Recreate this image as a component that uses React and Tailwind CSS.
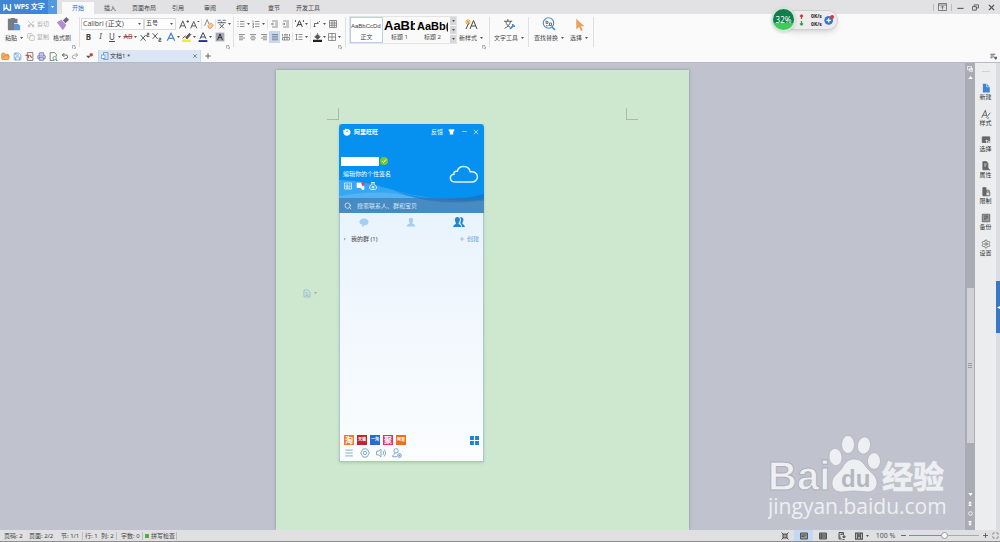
import React, { useState } from 'react';
import { Scissors, Copy, Undo2, Redo2, Printer, Save, FolderOpen, Settings, Plus, Minus, X, Menu, Search, Maximize } from 'lucide-react';

const Svg = ({ className = 'size-[10px]', box = '0 0 16 16', children }) => (
    <svg viewBox={box} className={`shrink-0 ${className}`} fill="none" stroke="currentColor" strokeWidth="1.4" aria-hidden="true">{children}</svg>
);

const Caret = ({ color = '#555' }) => (
    <svg viewBox="0 0 6 4" className="w-[3px] h-[2px] shrink-0" fill={color} aria-hidden="true"><path d="M0 0h6L3 4z" /></svg>
);

const Divider = () => <span className="w-px h-[30px] mt-[3px] bg-[#dfe0e3] shrink-0" />;
const MiniDivider = () => <span className="w-px h-[10px] mx-px bg-[#e2e3e6] shrink-0" />;

// Small ribbon button, with an optional drop-down caret
const Tool = ({ label, caret, active, children }) => (
    <button aria-label={label} className={`flex items-center h-[12px] shrink-0 ${active ? 'bg-[#c5d9f0]' : ''}`}>
        <span className={`flex items-center justify-center ${caret ? 'w-[10px]' : 'w-[11px]'}`}>{children}</span>
        {caret && <span className="w-[5px] flex justify-center"><Caret /></span>}
    </button>
);

// Large ribbon button: icon on top, label below
const BigTool = ({ label, caret = true, children }) => (
    <button className="flex flex-col items-center pt-[3px] px-[2px] shrink-0">
        <span className="h-[14px] flex items-center justify-center">{children}</span>
        <span className="h-[14px] flex items-center gap-[3px] whitespace-nowrap">{label}{caret && <Caret />}</span>
    </button>
);

const Launcher = () => (
    <button aria-label="更多设置" className="absolute right-[3px] bottom-px text-[#999]">
        <Svg className="size-[4px]"><path strokeWidth="3" d="M2 14V2h10M7 7h7v7H7" /></Svg>
    </button>
);

const lineIcons = {
    left: 'M2 3h12M2 6.500h8M2 10h12M2 13.500h8',
    center: 'M2 3h12M4 6.500h8M2 10h12M4 13.500h8',
    right: 'M2 3h12M6 6.500h8M2 10h12M6 13.500h8',
    justify: 'M2 3h12M2 6.500h12M2 10h12M2 13.500h12',
    spread: 'M1 2v5M15 2v5M4 3h8M4 6h8M1 9h14v5H1zM5 9v5M10 9v5',
    bullets: 'M1 3h2M1 8h2M1 13h2M6 3h9M6 8h9M6 13h9',
    numbers: 'M2 1v4M1 7h2v3H1M1 12h2v3H1M6 3h9M6 8h9M6 13h9',
    outdent: 'M2 2h12M8 6h6M8 10h6M2 14h12M6 8H1M3.500 5.500 1 8l2.500 2.500',
    indent: 'M2 2h12M8 6h6M8 10h6M2 14h12M1 8h5M3.500 5.500 6 8l-2.500 2.500',
    spacing: 'M7 3h8M7 8h8M7 13h8M3 2v12M1 4l2-2 2 2M1 12l2 2 2-2',
};

const LineIcon = ({ name }) => <Svg className="size-[8px]"><path d={lineIcons[name]} /></Svg>;

function TitleBar({ tab, setTab }) {
    const tabs = ['开始', '插入', '页面布局', '引用', '审阅', '视图', '章节', '开发工具'];
    return (
        <header className="h-[14px] flex items-stretch bg-[#e2e2e4] shrink-0">
            <button className="w-[57px] flex items-center bg-[#3f87d6] text-white font-bold text-[7px] pl-[3px]">
                <Svg className="w-[9px] h-[8px] mr-[2px]" box="0 0 18 16"><path strokeWidth="2.500" d="M2 2v12l5-5 4 5h4V2M7 3v6" /></Svg>
                <span className="flex-1 text-left whitespace-nowrap">WPS 文字</span>
                <span className="w-[9px] h-full bg-[#5599df] flex items-center justify-center"><Caret color="#fff" /></span>
            </button>
            <nav className="flex pl-[5px] pt-[2px]">
                {tabs.map(t => (
                    <button key={t} onClick={() => setTab(t)} className={`min-w-8 px-[6px] whitespace-nowrap leading-[12px] ${t === tab ? 'bg-[#fafafb] text-[#2f74c0]' : ''}`}>{t}</button>
                ))}
            </nav>
            <div className="ml-auto flex items-center text-[#555]">
                <span className="w-px h-[7px] bg-[#bbb]" />
                <button aria-label="隐藏功能区" className="w-[17px] flex justify-center">
                    <Svg className="w-[9px] h-[8px]" box="0 0 18 16"><path d="M1 1h16v14H1zM1 4h16M9 13V6M6 9l3-3 3 3" /></Svg>
                </button>
                <span className="w-px h-[7px] bg-[#bbb]" />
                <button aria-label="最小化" className="w-[16px] flex justify-center"><Svg className="size-[7px]"><path strokeWidth="2.500" d="M1 10h14" /></Svg></button>
                <button aria-label="还原" className="w-[14px] flex justify-center"><Svg className="size-[7px]"><path strokeWidth="2" d="M1 6h9v8H1zM5 6V2h10v7h-5" /></Svg></button>
                <button aria-label="关闭" className="w-[18px] flex justify-center"><X className="size-[9px]" strokeWidth={3} /></button>
            </div>
        </header>
    );
}

function FontGroup() {
    return (
        <div className="relative pt-[3px] pl-px w-[153px] shrink-0">
            <div className="flex items-center h-[13px]">
                <div className="relative w-[63px] h-[12px]">
                    <select aria-label="字体" className="appearance-none w-full h-full border border-[#d9dadd] bg-white text-[7px] leading-[9px] pl-px font-['Open_Sans','Noto_Sans_CJK_SC',sans-serif]">
                        <option>Calibri (正文)</option>
                    </select>
                    <span className="absolute right-[3px] top-0 h-full flex items-center pointer-events-none"><Caret /></span>
                </div>
                <div className="relative w-[32px] h-[12px]">
                    <select aria-label="字号" className="appearance-none w-full h-full border border-[#d9dadd] bg-white leading-[9px] pl-px">
                        <option>五号</option>
                    </select>
                    <span className="absolute right-[3px] top-0 h-full flex items-center pointer-events-none"><Caret /></span>
                </div>
                <div className="flex items-center pl-[2px]">
                    <Tool label="增大字号"><Svg><path d="M1 15 6 3l5 12M3 11h6M12 4h4M14 2v4" /></Svg></Tool>
                    <Tool label="减小字号"><Svg><path d="M1 15 6 4l5 11M3 11h6M12 4h3" /></Svg></Tool>
                    <MiniDivider />
                    <Tool label="清除格式"><Svg><path stroke="#777" d="M1 11 5 1l3 7" /><path stroke="#e39a55" fill="#f6c894" d="m6 11 5-5 4 4-4 5H8z" /></Svg></Tool>
                    <MiniDivider />
                    <Tool label="拼音指南" caret><Svg><path stroke="#5b8ccb" strokeWidth="2" d="M1 2h5M9 2h5" /><path d="M1 6h13M7 4v2M4 8l7 7M11 8l-7 7" /></Svg></Tool>
                </div>
            </div>
            <div className="flex items-center h-[14px] gap-1 text-[8px]">
                <div className="flex items-center gap-px pl-[2px]">
                    <Tool label="加粗"><b>B</b></Tool>
                    <Tool label="倾斜"><i className="font-serif">I</i></Tool>
                    <Tool label="下划线" caret><span className="underline">U</span></Tool>
                    <Tool label="删除线" caret><span className="line-through text-[7px] text-[#9c4a4a]">AB</span></Tool>
                    <Tool label="上标"><Svg><path d="m1 5 8 9M9 5l-8 9M11 2h3v2.500h-3V7h4" /></Svg></Tool>
                    <Tool label="下标"><Svg><path d="m1 2 8 9M9 2l-8 9M11 10h3v2.500h-3V15h4" /></Svg></Tool>
                </div>
                <div className="flex items-center gap-px">
                    <Tool label="文字效果" caret><Svg><path stroke="#4a87cd" strokeWidth="2" d="M2 14 8 2l6 12M4 10h8" /></Svg></Tool>
                    <Tool label="突出显示" caret><Svg><path fill="#666" d="m6 9 6-7 2 2-6 7z" /><path stroke="none" fill="#f2ee2f" d="M0 12h14v4H0z" /><path d="m1 10 5-4" /></Svg></Tool>
                    <Tool label="字体颜色" caret><Svg><path strokeWidth="1.600" d="M3 11 8 1l5 10M5 8h6" /><path stroke="none" fill="#1c2f9c" d="M1 13h14v3H1z" /></Svg></Tool>
                    <Tool label="字符底纹"><Svg><path stroke="none" fill="#a5a9b3" d="M1 1h14v14H1z" /><path stroke="#222" d="M4 13 8 3l4 10M6 9h4" /></Svg></Tool>
                </div>
            </div>
            <Launcher />
        </div>
    );
}

function ParagraphGroup() {
    return (
        <div className="relative pt-[3px] pl-[2px] w-[111px] shrink-0 text-[#666]">
            <div className="flex items-center h-[13px]">
                <Tool label="项目符号" caret><LineIcon name="bullets" /></Tool>
                <Tool label="编号" caret><LineIcon name="numbers" /></Tool>
                <MiniDivider />
                <Tool label="减少缩进"><LineIcon name="outdent" /></Tool>
                <Tool label="增加缩进"><LineIcon name="indent" /></Tool>
                <MiniDivider />
                <Tool label="中文版式" caret><Svg className="size-[9px]"><path stroke="#333" strokeWidth="1.700" d="M3 14 8 3l5 11M5 10h6M1 2v3M15 2v3" /></Svg></Tool>
                <MiniDivider />
                <Tool label="制表位" caret><Svg className="size-[8px]"><path stroke="#333" d="M3 14V7h7M8 4l4 3M12 2l2 2M1 12l2 2 2-2" /></Svg></Tool>
                <Tool label="表格"><Svg className="size-[8px]"><path d="M1 1h14v14H1zM1 6h14M1 10.500h14M6 1v14M10.500 1v14" /></Svg></Tool>
            </div>
            <div className="flex items-center h-[14px]">
                <Tool label="左对齐"><LineIcon name="left" /></Tool>
                <Tool label="居中"><LineIcon name="center" /></Tool>
                <Tool label="右对齐"><LineIcon name="right" /></Tool>
                <Tool label="两端对齐" active><LineIcon name="justify" /></Tool>
                <Tool label="分散对齐"><LineIcon name="spread" /></Tool>
                <MiniDivider />
                <Tool label="行距" caret><LineIcon name="spacing" /></Tool>
                <MiniDivider />
                <Tool label="底纹" caret><Svg className="size-[9px]"><path fill="#555" d="m3 7 5-5 5 5-5 4zM8 2V0" /><path stroke="none" fill="#222" d="M0 12h16v4H0z" /></Svg></Tool>
                <Tool label="边框" caret><Svg className="size-[8px]"><path d="M1 1h14v14H1zM8 1v14M1 8h14" /></Svg></Tool>
            </div>
            <Launcher />
        </div>
    );
}

function StyleGallery() {
    const styles = [
        { name: '正文', sample: 'AaBbCcDd', font: 'text-[6px]', box: 'border-[#b9cfe9] bg-white' },
        { name: '标题 1', sample: 'AaBb', font: 'text-[13px] font-bold text-black', box: 'border-transparent' },
        { name: '标题 2', sample: 'AaBb(', font: 'text-[11px] font-bold text-black', box: 'border-transparent' },
    ];
    return (
        <div className="flex mt-[2px] ml-[3px] h-[28px] border border-[#e3e4e6] shrink-0">
            {styles.map(s => (
                <button key={s.name} className={`w-[33px] border overflow-hidden flex flex-col items-center ${s.box}`}>
                    <span className={`h-[16px] w-full leading-[16px] text-left whitespace-nowrap overflow-hidden font-['Liberation_Sans',sans-serif] ${s.font}`}>{s.sample}</span>
                    <span className="leading-[9px]">{s.name}</span>
                </button>
            ))}
            <div className="flex flex-col w-[6px] gap-px ml-px">
                {['上一行', '下一行', '展开样式'].map(l => (
                    <button key={l} aria-label={l} className="flex-1 bg-[#d6d7da] flex items-center justify-center"><Caret /></button>
                ))}
            </div>
        </div>
    );
}

function Ribbon() {
    return (
        <div className="flex h-[36px] bg-[#fafafb] shrink-0">
            <div className="relative flex w-[79px] pl-[3px] shrink-0">
                <BigTool label="粘贴">
                    <Svg className="size-[14px]"><path stroke="none" fill="#777b83" d="M1 2h3V1h5v1h3v5H8v8H1z" /><path stroke="none" fill="#5f95da" d="M8 8h5l2 2v5H8z" /></Svg>
                </BigTool>
                <div className="pt-[3px] pl-[2px] text-[#aaa] flex flex-col">
                    <button className="h-[13px] flex items-center gap-[2px]"><Scissors className="size-[8px] rotate-270" />剪切</button>
                    <button className="h-[14px] flex items-center gap-[2px]"><Copy className="size-[8px]" />复制</button>
                </div>
                <div className="ml-[2px]">
                    <BigTool label="格式刷" caret={false}>
                        <Svg className="size-[14px]"><path stroke="none" fill="#b58bd0" d="m2 6 5-3 6 6-4 6z" /><path stroke="none" fill="#666b75" d="m9 4 4-4 3 3-4 4z" /></Svg>
                    </BigTool>
                </div>
                <Launcher />
            </div>
            <Divider />
            <FontGroup />
            <Divider />
            <ParagraphGroup />
            <Divider />
            <StyleGallery />
            <div className="relative pr-[4px]">
                <BigTool label="新样式">
                    <Svg className="w-[14px] h-[12px]" box="0 0 28 24"><path stroke="#eba832" strokeWidth="2" d="M8 2v12M2 8h12M4 4l8 8M12 4l-8 8" /><path stroke="#444" strokeWidth="2" d="m12 22 7-17 7 17M15 16h8M4 22l5-11" /></Svg>
                </BigTool>
                <Launcher />
            </div>
            <Divider />
            <div className="px-[2px]">
                <BigTool label="文字工具">
                    <Svg className="size-[13px]" box="0 0 24 24"><path stroke="#555" strokeWidth="1.800" d="M2 6h15M9 2v4M5 6c1 6 5 10 8 11M14 6c-1 6-6 11-11 13" /><path stroke="#4a87cd" strokeWidth="3" d="m13 20 6-6M18 11v4h4" /></Svg>
                </BigTool>
            </div>
            <Divider />
            <div className="flex gap-[2px] px-[3px]">
                <BigTool label="查找替换">
                    <Svg className="size-[14px]" box="0 0 28 28"><circle cx="13" cy="12" r="10.500" stroke="#4a8cd0" strokeWidth="2.200" /><path stroke="#4a8cd0" strokeWidth="3.500" d="m20 20 6 6" /><path stroke="#777" strokeWidth="2" d="M8 7v6h4V9H8M13 17h6v-5h-4v5M9 16v2h2" /></Svg>
                </BigTool>
                <BigTool label="选择">
                    <Svg className="size-[13px]"><path stroke="none" fill="#e8a15f" d="M4 1v13l3.500-3L10 16l2-1-2.200-5H14z" /></Svg>
                </BigTool>
            </div>
            <Divider />
        </div>
    );
}

function DocTabs() {
    return (
        <div className="h-[13px] flex items-center bg-[#fafafb] border-b border-[#b4bac8] shrink-0 text-[#666]">
            <div className="w-[81px] flex justify-around items-center">
                <button aria-label="打开"><FolderOpen className="size-[9px]" stroke="#d98328" fill="#f3b05f" /></button>
                <button aria-label="保存"><Save className="size-[9px]" stroke="#5a95d8" /></button>
                <button aria-label="输出为PDF"><Svg className="size-[9px]"><path d="M4 1h10v14H4z" /><path stroke="#c8474b" strokeWidth="2" d="M1 6h5v5M8 5l4 5" /></Svg></button>
                <button aria-label="打印"><Printer className="size-[9px]" stroke="#6c6fae" fill="#c9caea" /></button>
                <button aria-label="打印预览"><Svg className="size-[9px]"><path d="M9 15H2V1h8l3 3v4" /><circle cx="10" cy="11" r="3" stroke="#4f9c5c" /><path stroke="#4f9c5c" strokeWidth="2" d="m12 13 3 3" /></Svg></button>
                <button aria-label="撤销"><Undo2 className="size-[8px]" strokeWidth={3} /></button>
                <button aria-label="恢复"><Redo2 className="size-[8px] text-[#aaa]" strokeWidth={3} /></button>
            </div>
            <button aria-label="自定义快速访问工具栏" className="w-[17px] flex justify-center">
                <Svg className="size-[7px]"><path stroke="none" fill="#555" d="M0 6h11l-5.500 6z" /><circle cx="12" cy="4" r="4" stroke="none" fill="#e03a3a" /></Svg>
            </button>
            <div className="w-[103px] h-full bg-[#dae6f4] border-x border-[#c9d8ea] flex items-center px-[2px]">
                <Svg className="size-[8px] text-[#4a87cd]"><path d="M5 1h9v14H5z" /><path fill="#fff" d="M1 6h7v7H1z" /></Svg>
                <span className="ml-px flex-1 text-[#333]">文档1 *</span>
                <button aria-label="关闭文档"><X className="size-[6px]" strokeWidth={3} /></button>
            </div>
            <button aria-label="新建标签" className="w-[14px] flex justify-center"><Plus className="size-[8px]" strokeWidth={3} /></button>
            <button aria-label="窗格选项" className="ml-auto mr-[3px]"><Svg className="size-[7px]"><path strokeWidth="2.500" d="M1 3h11M1 7h8M1 11h5M10 10h6l-3 4z" /></Svg></button>
        </div>
    );
}

const shopIcons = [
    { text: '淘', color: 'bg-[#ee7a30]', font: 'text-[8px]' },
    { text: '天猫', color: 'bg-[#c3222c]', font: 'text-[4px]' },
    { text: '一淘', color: 'bg-[#2b6ad6]', font: 'text-[4px]' },
    { text: '聚', color: 'bg-[#e32f6c]', font: 'text-[8px]' },
    { text: '阿里', color: 'bg-[#e8701f]', font: 'text-[4px]' },
];

const Person = ({ className }) => (
    <Svg className={className}><path stroke="none" fill="currentColor" d="M8 1c2.500 0 3.500 1.800 3.500 4S10.500 8.500 10 9v1.500c1 .8 4.500 1.200 5 4.500H1c.5-3.300 4-3.700 5-4.500V9C5 8 4.500 7 4.500 5S5.500 1 8 1z" /></Svg>
);

function ChatWindow() {
    return (
        <section className="w-[145px] h-[338px] flex flex-col border border-[#a9c6d8] bg-linear-to-b from-[#e3f0fb] to-[#fbfdff] shadow-sm">
            <div className="relative -m-px mb-0 h-[89px] flex flex-col bg-[#0690f0] text-white rounded-t-sm overflow-hidden">
                {/* Wave behind the profile area */}
                <svg viewBox="0 0 145 35" preserveAspectRatio="none" className="absolute bottom-0 left-0 w-full h-[35px]" aria-hidden="true">
                    <path fill="#fff" fillOpacity=".2" d="M0 2c22 0 40 6 58 11s44 10 87 10v12H0z" />
                    <path fill="#0769c0" fillOpacity=".5" d="M54 12c30 10 62 12 91 4v6c-32 6-62 2-91-10z" />
                    <path fill="#fff" fillOpacity=".15" d="M0 18c20-3 44-6 68 0s50 8 77 3v14H0z" />
                </svg>
                <div className="relative h-[15px] flex items-center px-[4px]">
                    <Svg className="size-[8px]"><path stroke="none" fill="#fff" d="M5 1c1 0 2 1 2.500 1.500C12 1 16 5 15 10c-1 4-5 6-8 5.500C2 15 0 11 1 7l-1-3 3 .5C4 3 4 2 5 1z" /><circle cx="8" cy="7" r="1.500" stroke="none" fill="#0690f0" /></Svg>
                    <span className="ml-[3px] font-bold">阿里旺旺</span>
                    <button className="ml-auto mr-[5px]">反馈</button>
                    <button aria-label="换肤"><Svg className="size-[7px]"><path stroke="none" fill="#fff" d="M5 2c1 2 5 2 6 0l4 2-1.500 4L12 7.500V15H4V7.500L2.500 8 1 4z" /></Svg></button>
                    <button aria-label="最小化" className="ml-[6px]"><Minus className="size-[7px]" /></button>
                    <button aria-label="关闭" className="ml-[4px]"><X className="size-[8px]" /></button>
                </div>
                <div className="relative flex-1 flex items-center justify-between pt-[14px] pb-[5px] pl-[2px] pr-[6px]">
                    <div className="flex flex-col">
                        <div className="flex items-center gap-px">
                            <span className="w-[38px] h-[9px] bg-white" />
                            <Svg className="size-[8px]"><circle cx="8" cy="8" r="8" stroke="none" fill="#7bc62d" /><path stroke="#fff" strokeWidth="2" d="m4 8 3 3 5-6" /></Svg>
                        </div>
                        <span className="pl-[2px] mt-[3px] leading-[10px]">编辑你的个性签名</span>
                        <div className="flex gap-[4px] pl-[3px] mt-[3px]">
                            <button aria-label="名片"><Svg className="size-[8px]"><path d="M1 2h14v12H1zM4 6h4v4H4zM10 6h3M10 9h3M4 12h8" /></Svg></button>
                            <button aria-label="消息"><Svg className="w-[9px] h-[8px]" box="0 0 18 16"><path fill="#fff" d="M2 2h9v7h5v6h-4l-3-4H2z" /><circle cx="14" cy="3" r="3" stroke="none" fill="#e6473f" /></Svg></button>
                            <button aria-label="钱包"><Svg className="size-[8px]"><path strokeWidth="1.800" d="M5 1h6L9.500 4.500c3 1 5.500 4 5.500 7S12 15 8 15s-7-.5-7-3.500 2.500-6 5.500-7zM5 10h6M8 8v5" /></Svg></button>
                        </div>
                    </div>
                    <Svg className="w-[29px] h-[21px]" box="0 0 29 21"><path stroke="#d9f3ff" strokeWidth="1.500" d="M6 19h17a5 5 0 0 0 .5-10.300h-2.300A6.700 6.700 0 0 0 8.200 8.300C5 8 4.600 10 5 11.200 0 12 0 18.500 6 19z" /></Svg>
                </div>
                <label className="relative h-[15px] flex items-center px-[5px] gap-[5px] bg-[#3f6fa0]/60">
                    <Search className="size-[8px] shrink-0" />
                    <input type="search" aria-label="搜索" placeholder="搜索联系人、群和宝贝" className="w-full min-w-0 bg-transparent outline-none placeholder:text-[#d5e6f5]" />
                </label>
            </div>
            <div className="h-[18px] grid grid-cols-3 items-center justify-items-center shrink-0 text-[#a4cff2]">
                <button aria-label="最近会话"><Svg className="w-[10px] h-[9px]"><path stroke="none" fill="currentColor" d="M8 1c5 0 8 2.500 8 6s-3 6-7 6l-4 3v-4C2 11 0 9.500 0 7c0-3.500 3-6 8-6z" /></Svg></button>
                <button aria-label="好友"><Person className="size-[10px]" /></button>
                <button aria-label="群" className="flex text-[#2487d6]">
                    <Svg className="w-[12px] h-[10px]" box="0 0 19 16"><path stroke="none" fill="currentColor" d="M7 0c2.500 0 4 1.600 4 4.500S9.500 8.500 9 9v2c1 .8 4 1 4.500 5H0c.5-4 3.500-4.200 4.500-5V9C4 8.500 3 7.400 3 4.500S4.500 0 7 0zM11 0c4 0 5.500 1.500 5.500 4.500s-1 4-1.500 4.500v2c1 .8 3.500 1 4 5h-4.500c-.5-3-1.500-4.500-3-5.500V9c1.500-2 2-6-.5-9z" /></Svg>
                </button>
            </div>
            <div className="h-[15px] flex items-center px-[4px] shrink-0">
                <button className="flex items-center gap-[5px] text-[#444]">
                    <svg viewBox="0 0 4 6" className="w-[2px] h-[4px]" fill="#8db9dc" aria-hidden="true"><path d="M0 0v6l4-3z" /></svg>
                    我的群 (1)
                </button>
                <button className="ml-auto flex items-center gap-[2px] text-[#5f9fd4]"><Plus className="size-[6px]" />创建</button>
            </div>
            <div className="flex-1" />
            <div className="flex items-center gap-[3px] pl-[4px] pr-[4px]">
                {shopIcons.map(s => (
                    <a key={s.text} href="#" className={`size-[10px] flex items-center justify-center text-white font-bold leading-none whitespace-nowrap overflow-hidden ${s.color} ${s.font}`}>{s.text}</a>
                ))}
                <button aria-label="应用" className="ml-auto text-[#1a86d9]"><Svg className="size-[9px]"><path stroke="none" fill="currentColor" d="M0 0h7v7H0zM9 0h7v7H9zM0 9h7v7H0zM9 9h7v7H9z" /></Svg></button>
            </div>
            <div className="flex items-center gap-[6px] pl-[4px] py-[3px] text-[#6f9cc0]">
                <button aria-label="菜单"><Menu className="size-[10px]" /></button>
                <button aria-label="设置"><Svg><path d="M5 1.500h6l1.500 2.500L15 8l-2.500 4L11 14.500H5L3.500 12 1 8l2.500-4z" /><circle cx="8" cy="8" r="2.700" /></Svg></button>
                <button aria-label="声音"><Svg><path d="M1 5h3l4-3v12l-4-3H1zM11 5c1.500 2 1.500 4 0 6M13 2.500c3 3.500 3 7.500 0 11" /></Svg></button>
                <button aria-label="添加好友"><Svg><circle cx="6.500" cy="4.500" r="3.500" /><path d="M5 8c0 2-4 2-4 6h7" /><circle cx="12" cy="12" r="3" /><path d="M12 10.500v3M10.500 12h3" /></Svg></button>
            </div>
        </section>
    );
}

const Watermark = () => (
    <svg viewBox="0 0 180 90" className="w-[180px] h-[90px]" fill="#eeeff2" stroke="#adb0ba" strokeWidth=".7" aria-hidden="true">
        <text x="0" y="56" fontSize="40" strokeWidth="1" fontWeight="700" fontFamily="'Liberation Sans', sans-serif">Bai</text>
        <ellipse cx="67.500" cy="23" rx="6.500" ry="8.700" transform="rotate(-8 67.500 23)" />
        <ellipse cx="80" cy="10.500" rx="6.500" ry="9" />
        <ellipse cx="96" cy="11.500" rx="6.500" ry="8.700" transform="rotate(10 96 11.500)" />
        <ellipse cx="106" cy="27" rx="6.500" ry="8.300" />
        <path d="M86 25c7 0 9 4 13 9s10 8 10 15c0 5-4 9-9 9-5 0-9-1-14-1s-8 1-13 1c-6 0-9-4-9-9 0-7 6-9 10-15 3-5 6-9 12-9z" />
        <text x="73" y="53" fontSize="24" fontWeight="700" fontFamily="'Liberation Sans', sans-serif" fill="#b4b7c2" stroke="none">du</text>
        <text x="114" y="54" fontSize="31" fontWeight="700" stroke="#eeeff2" fontFamily="'Noto Sans CJK SC', sans-serif">经验</text>
        <text x="0" y="80" fontSize="21" stroke="none" fontFamily="'Open Sans', sans-serif">jingyan.baidu.com</text>
    </svg>
);

function ScrollBar() {
    return (
        <div className="w-[10px] flex flex-col items-center bg-[#a9abb5] shrink-0 py-[2px] text-white">
            <button aria-label="浏览" className="h-[8px]"><Svg className="size-[6px]"><path strokeWidth="2" d="M1 1h11v9H1zM7 6h8v8H7z" /></Svg></button>
            <button aria-label="向上" className="h-[8px] flex items-center"><svg viewBox="0 0 6 4" className="w-[5px] h-[3px]" fill="#fff"><path d="M0 4h6L3 0z" /></svg></button>
            <span className="flex-206" />
            <span className="flex-155 w-[7px] bg-[#d0d1d6] flex flex-col items-center justify-center gap-px">
                <i className="w-[4px] h-px bg-[#999]" /><i className="w-[4px] h-px bg-[#999]" /><i className="w-[4px] h-px bg-[#999]" />
            </span>
            <span className="flex-47" />
            <button aria-label="向下" className="h-[9px] flex items-center"><svg viewBox="0 0 6 4" className="w-[5px] h-[3px]" fill="#fff"><path d="M0 0h6L3 4z" /></svg></button>
            <button aria-label="上一页" className="h-[10px] flex items-center"><svg viewBox="0 0 6 8" className="w-[4px] h-[5px]" fill="#fff"><path d="M0 4h6L3 0zM0 8h6L3 4z" /></svg></button>
            <button aria-label="选择浏览对象" className="h-[10px] flex items-center"><Svg className="size-[5px]"><circle cx="8" cy="8" r="6" strokeWidth="2.500" /></Svg></button>
            <button aria-label="下一页" className="h-[9px] flex items-center"><svg viewBox="0 0 6 8" className="w-[4px] h-[5px]" fill="#fff"><path d="M0 0h6L3 4zM0 4h6L3 8z" /></svg></button>
        </div>
    );
}

function SidePane() {
    const items = [
        { label: '新建', icon: <Svg><path stroke="none" fill="#3c84d6" d="M3 1h6l5 5v9H3z" /><path stroke="#fff" strokeWidth="1" d="M9 1v5h5" /></Svg> },
        { label: '样式', icon: <Svg><path strokeWidth="1.600" d="m1 14 6-12 2 9M3 10h6M8 14l7-8M10 15l3-1" /></Svg> },
        { label: '选择', icon: <Svg><path fill="currentColor" d="M2 3h12v9H2z" /><path stroke="#eee" fill="#555" d="m8 8 6 3-3 1-1 3z" /></Svg> },
        { label: '属性', icon: <Svg><path fill="currentColor" d="M3 1h6l2 3v10H3z" /><path stroke="#ddd" d="M5 5h4M5 8h3" /><path strokeWidth="2" d="m10 11 4 4" /></Svg> },
        { label: '限制', icon: <Svg><path fill="currentColor" d="M3 1h5v13H3z" /><path fill="#ddd" d="M8 8h6v6H8zM9 8V5h4v3" /></Svg> },
        { label: '备份', icon: <Svg><path fill="#999" d="M2 2h12v12H2z" /><path strokeWidth="2" d="M5 5h6M5 11l6-5M5 8h2" /></Svg> },
        { label: '设置', icon: <Settings className="size-[10px]" /> },
    ];
    return (
        <aside className="flex shrink-0 bg-[#dcdde0]">
            <div className="w-[21px] bg-[#ecedef] flex flex-col items-center text-[#666]">
                <span className="w-[8px] h-px mt-[8px] mb-[10px] bg-[#d2d3d6]" />
                {items.map(i => (
                    <button key={i.label} className="h-[26px] w-full flex flex-col items-center">
                        <span className="h-[11px] flex items-center">{i.icon}</span>
                        <span className="leading-[8px] text-[#333]">{i.label}</span>
                    </button>
                ))}
            </div>
            <div className="w-[4px] flex flex-col">
                <span className="flex-218" />
                <button aria-label="展开侧栏" className="flex-52 bg-[#3a78c4] text-white flex items-center justify-center">
                    <svg viewBox="0 0 4 4" className="size-[3px]" fill="#fff"><path d="M4 0v4L0 2z" /></svg>
                </button>
                <span className="flex-197" />
            </div>
        </aside>
    );
}

function Workspace() {
    return (
        <main className="flex-1 min-h-0 flex bg-[#c0c3cd]">
            <div className="relative flex-1 min-w-0 overflow-hidden flex justify-center pt-[7px]">
                <article className="w-[413px] shrink-0 bg-[#cde8cf] shadow-[0_0_3px_#8b8f9b] pt-[38px]">
                    <div className="flex justify-between px-[51px]">
                        <span className="w-[12px] h-[12px] border-r border-b border-[#a8bcab]" />
                        <span className="w-[12px] h-[12px] border-l border-b border-[#a8bcab]" />
                    </div>
                    <div className="flex mt-[4px]">
                        <div className="w-[63px] flex items-center pl-[27px] gap-[3px] text-[#8faed0]">
                            <Svg className="w-[8px] h-[9px]"><path d="M2 1h8l4 4v10H2zM5 6h4M5 9h6M5 12h6" /></Svg>
                            <Caret color="#9aa8a4" />
                        </div>
                        <ChatWindow />
                    </div>
                </article>
                <div className="absolute right-[17px] bottom-[6px]"><Watermark /></div>
            </div>
            <ScrollBar />
            <SidePane />
        </main>
    );
}

function StatusBar() {
    const [zoom, setZoom] = useState(50);
    const views = [
        { label: '全屏显示', d: 'M1 1l4 4M15 1l-4 4M1 15l4-4M15 15l-4-4M4 4h8v8H4z' },
        { label: '页面视图', d: 'M1 2h14v12H1zM3 9h6M3 6h10', active: true },
        { label: '大纲视图', d: 'M1 2h14v12H1zM1 6h14M1 10h14M5 2v12' },
        { label: 'Web版式', d: 'M2 1h9v5M2 1v13h5M5 5h4M10 8h4v3h-4zM9 15h4' },
    ];
    return (
        <footer className="h-[12px] flex items-center bg-[#e0dfe1] border-b border-[#8d8d92] text-[#444] shrink-0 pl-[4px] whitespace-nowrap">
            <span className="w-[25px]">页码: 2</span>
            <span className="w-[32px]">页面: 2/2</span>
            <span className="w-[21px]">节: 1/1</span>
            <span className="border-l border-[#bbb] pl-[2px] w-[19px] leading-[8px]">行: 1</span>
            <span className="w-[15px]">列: 2</span>
            <span className="border-l border-[#bbb] pl-[4px] w-[26px] leading-[8px]">字数: 0</span>
            <button className="border-x border-[#bbb] pl-[2px] pr-px flex items-center gap-[2px] leading-[8px]"><span className="size-[4px] bg-[#4eb038]" />拼写检查</button>
            <div className="ml-auto flex items-center h-full text-[#555]">
                {views.map(v => (
                    <button key={v.label} aria-label={v.label} className={`w-[19px] h-full flex items-center justify-center ${v.active ? 'bg-[#c3d8f2]' : ''}`}>
                        <Svg className="size-[8px]"><path strokeWidth="2" fill="#999" d={v.d} /></Svg>
                    </button>
                ))}
                <button aria-label="护眼模式" className="w-[22px] flex items-center justify-center gap-[3px]"><Svg className="size-[8px]"><path strokeWidth="2.500" d="M1 2h14v12H1zM5 2v12M11 2v12" /><path fill="#555" d="M7 5h2v5H7z" /></Svg><Caret /></button>
                <span className="w-[25px] text-center text-[7px]">100 %</span>
                <button aria-label="缩小" className="w-[10px] flex justify-center"><Minus className="size-[7px]" strokeWidth={3} /></button>
                <input type="range" aria-label="显示比例" min="0" max="100" value={zoom} onChange={e => setZoom(e.target.value)}
                    className="appearance-none w-[70px] h-px mx-px bg-linear-to-r from-[#5b93d4] from-50% to-[#aaa] to-50% [&::-webkit-slider-thumb]:appearance-none [&::-webkit-slider-thumb]:size-[7px] [&::-webkit-slider-thumb]:rounded-full [&::-webkit-slider-thumb]:bg-white [&::-webkit-slider-thumb]:border [&::-webkit-slider-thumb]:border-[#999]" />
                <button aria-label="放大" className="w-[10px] flex justify-center"><Plus className="size-[7px]" strokeWidth={3} /></button>
                <button aria-label="适合窗口" className="w-[10px] flex justify-center"><Maximize className="size-[7px]" /></button>
            </div>
        </footer>
    );
}

// Floating network speed widget, sits over the title bar
const SpeedBall = () => (
    <div className="absolute top-[7px] right-[162px] flex items-center">
        <div className="z-10 size-[25px] rounded-full border-2 border-[#d5e3d8] bg-linear-to-b from-[#0d7f4d] from-68% to-[#3fcb58] to-68% text-white text-[8px] leading-none flex items-center justify-center shadow">32%</div>
        <div className="-ml-[12px] w-[54px] h-[20px] rounded-full bg-[#ececee] border border-[#d0d0d3] shadow-md pl-[14px] pr-[3px] flex items-center justify-between text-[#222] text-[5px] font-bold">
            <div className="flex flex-col gap-[2px]">
                <Svg className="size-[5px]"><path stroke="#d03c36" strokeWidth="4" d="M8 16V3M3 8l5-5 5 5" /></Svg>
                <Svg className="size-[5px]"><path stroke="#2fa04c" strokeWidth="4" d="M8 0v13M3 8l5 5 5-5" /></Svg>
            </div>
            <div className="flex flex-col leading-[8px] pl-[5px]"><span>0K/s</span><span>0K/s</span></div>
            <button aria-label="加速"><Svg><circle cx="7.500" cy="8.500" r="7" stroke="none" fill="#3b76cf" /><path stroke="#fff" strokeWidth="2" d="M7.500 5v7M4 8.500h7" /><circle cx="13" cy="3" r="3" stroke="none" fill="#d33" /></Svg></button>
        </div>
    </div>
);

export default function App() {
    const [tab, setTab] = useState('开始');

    return (
        <div className="relative h-screen flex flex-col overflow-hidden font-['Noto_Sans','Noto_Sans_CJK_SC',sans-serif] text-[6px] leading-[10px] text-[#444]">
            <TitleBar tab={tab} setTab={setTab} />
            <Ribbon />
            <DocTabs />
            <Workspace />
            <StatusBar />
            <SpeedBall />
        </div>
    );
}
